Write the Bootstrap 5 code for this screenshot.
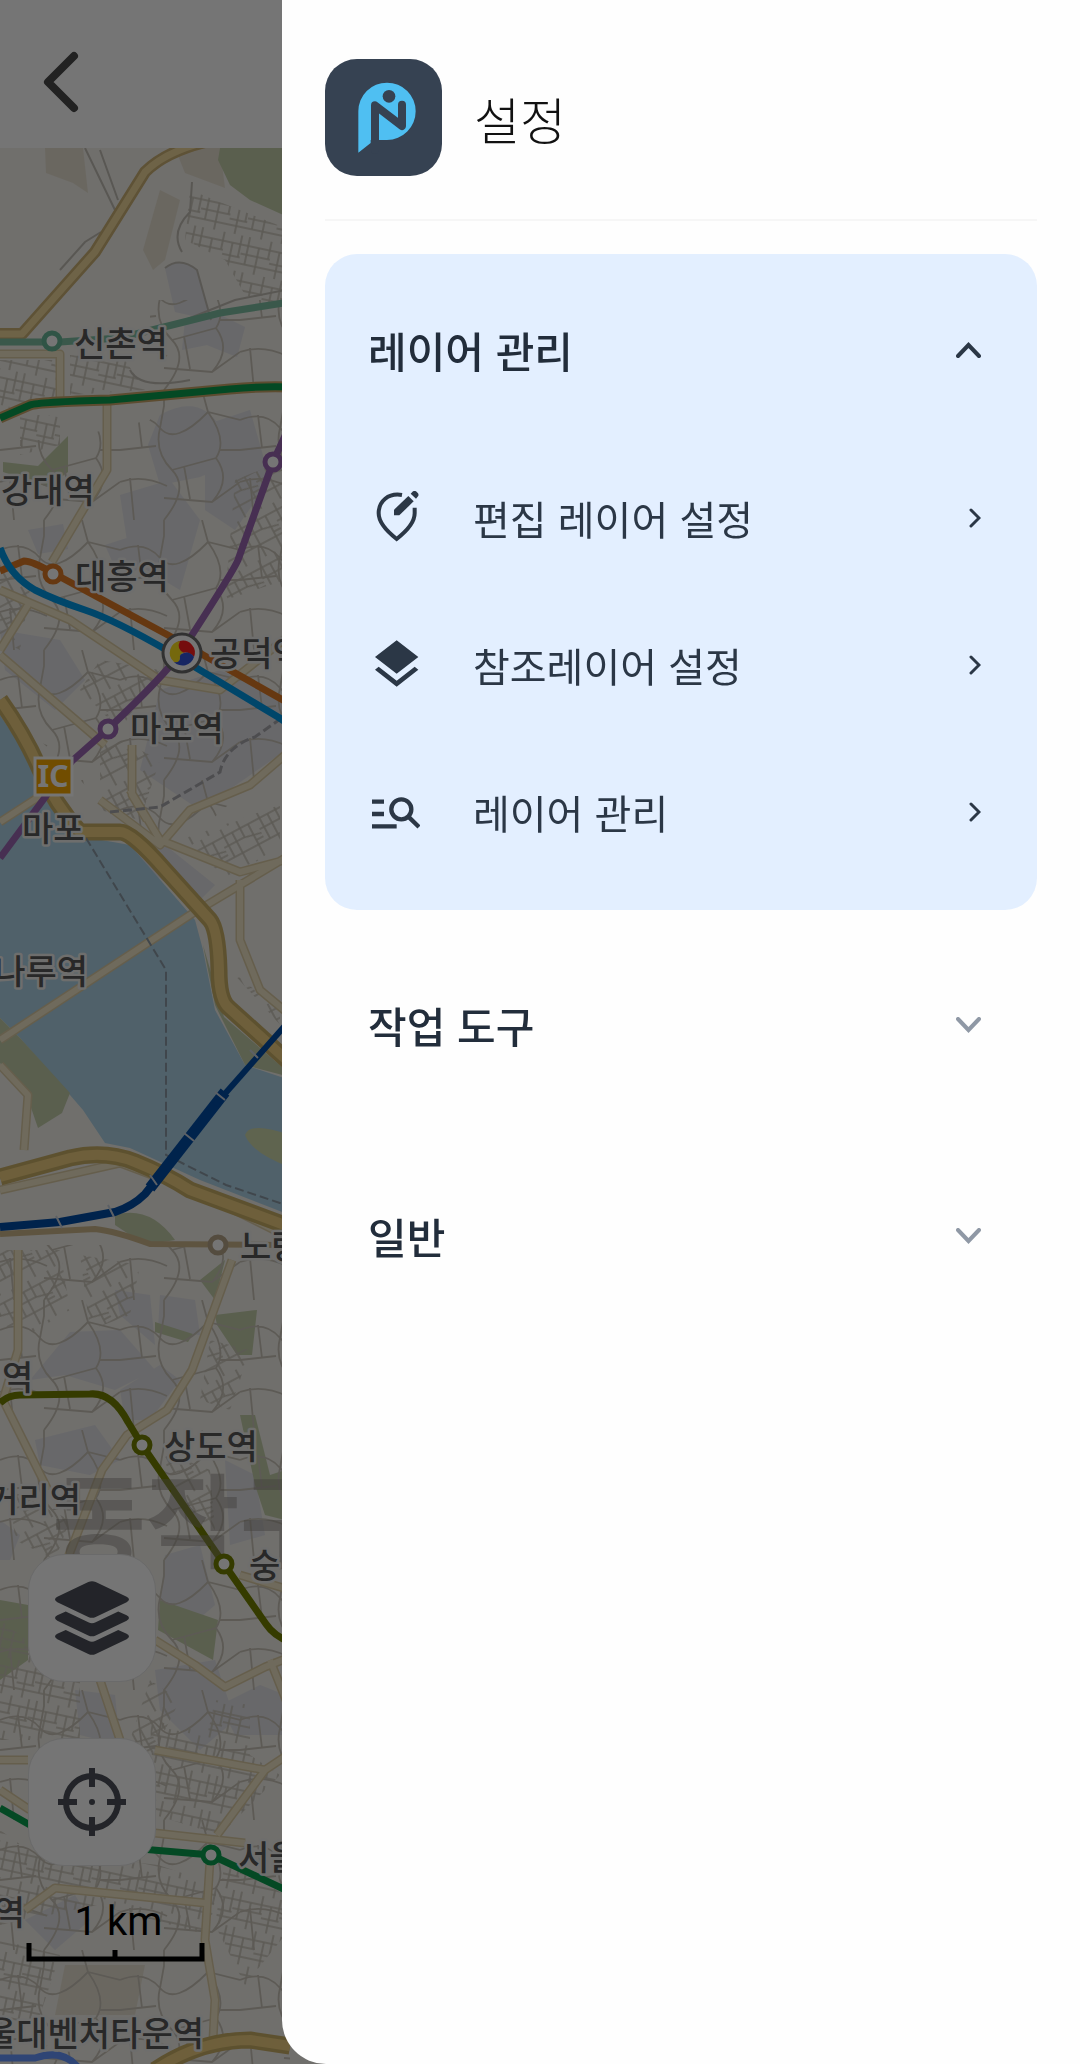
<!DOCTYPE html>
<html lang="ko">
<head>
<meta charset="utf-8">
<meta name="viewport" content="width=device-width, initial-scale=1">
<title>설정</title>
<link href="https://cdn.jsdelivr.net/npm/bootstrap@5.3.0/dist/css/bootstrap.min.css" rel="stylesheet">
<style>
  :root { --ink: #2b3746; --panel: #e3efff; }
  body { font-family: "Noto Sans CJK KR", sans-serif; color: var(--ink); background: #fff; }
  .topbar { height: 148px; padding: 0 40px; }
  .back-btn { width: 44px; height: 68px; margin-top: 16px; line-height: 0; }
  .map-area { background: #f3f1eb; }
  .map-tools { padding: 0 26px 102px; }
  .tool-btn { width: 128px; height: 128px; border-radius: 36px; background: #fff; color: #4c5059; border: 1px solid #e6e6e6; }
  .tool-stack { gap: 56px; padding-left: 2px; }
  .scale-text { font: 40px/40px Roboto, sans-serif; color: #000; margin-top: 36px; padding-left: 6px; width: 179px; text-align: center; }
  .scale-rule { display: block; }
  .scrim { background: rgba(0, 0, 0, .54); z-index: 1040; }
  .drawer.offcanvas { --bs-offcanvas-width: calc(100% - 282px); --bs-offcanvas-bg: #fefefe; --bs-offcanvas-border-width: 0; border-bottom-left-radius: 44px; padding: 0 43px; }
  .drawer-head { padding: 59px 0 43px; gap: 32px; border-bottom: 2px solid #f6f6f6; margin-bottom: 33px; }
  .drawer-title { font-size: 50px; line-height: 60px; font-weight: 300; color: #111; }
  .menu-stack { gap: 19px; }
  .menu-group { border-radius: 32px; }
  .menu-group.is-open { background: var(--panel); padding-bottom: 23px; }
  .group-btn { height: 192px; padding: 0 56px 0 43px; font-size: 42px; line-height: 60px; font-weight: 500; color: #222d3b; }
  .group-btn .chev { color: #8f98a5; }
  .is-open .group-btn .chev { color: var(--ink); }
  .menu-link { height: 147px; padding: 0 56px 4px 47px; font-size: 40px; line-height: 60px; color: var(--ink); }
  .menu-link span { margin-left: 53px; }
  .map-label { font: 500 34px "Noto Sans CJK KR", sans-serif; fill: #575757; stroke: #f0f0ee; stroke-width: 5px; paint-order: stroke; stroke-linejoin: round; }
  .district { font: 700 102px "Noto Sans CJK KR", sans-serif; fill: #8c8880; fill-opacity: .45; }
  .ic-text { font: 700 30px "Noto Sans", sans-serif; fill: #fff; }
</style>
<script src="https://cdn.jsdelivr.net/npm/bootstrap@5.3.0/dist/js/bootstrap.bundle.min.js"></script>
</head>
<body>
<div class="d-flex flex-column vh-100 overflow-hidden">
  <header class="topbar bg-white d-flex align-items-center flex-shrink-0">
    <button type="button" class="btn p-0 border-0 back-btn" aria-label="뒤로">
      <svg width="44" height="68" viewBox="0 0 44 68" fill="none" stroke="#4a4a4a" stroke-width="8" stroke-linecap="round" stroke-linejoin="round"><path d="M34 8 8 34l26 26"/></svg>
    </button>
  </header>
  <main class="map-area position-relative flex-fill overflow-hidden">
    <svg class="position-absolute top-0 start-0 w-100 h-100" viewBox="0 148 1080 1916" preserveAspectRatio="xMinYMin slice" fill="none">
      <defs>
        <pattern id="blocks" width="48" height="36" patternUnits="userSpaceOnUse" patternTransform="rotate(12)"><path d="M0 9H48M0 18H30M30 22H48M0 28H48M6 0V28M17 9V36M28 0V18M38 9V36M46 0V22" stroke="#c9c4b8" stroke-width="1.6"/></pattern>
        <pattern id="blocks2" width="40" height="44" patternUnits="userSpaceOnUse" patternTransform="rotate(-28)"><path d="M0 8H40M0 18H22L40 22M0 31H40M5 0V31M14 8V44M23 0V18M32 8V44M32 26H40" stroke="#c9c4b8" stroke-width="1.6"/></pattern>
        <pattern id="lanes" width="120" height="130" patternUnits="userSpaceOnUse"><path d="M0 30Q25 20 40 38T88 22L120 30M40 38Q34 62 52 80T44 130M52 80L96 68Q108 50 88 22L82 0M96 68Q112 90 92 112L44 108M0 92Q22 84 47 96M92 112L120 92M0 60L36 56M64 76 70 109M18 25 22 58M44 0V16L40 38M120 60L99 60M10 88 14 130" stroke="#cac5b9" stroke-width="1.8"/></pattern>
      </defs>
      <!-- land use -->
      <g fill="#e2e2e8">
        <path d="M165 268q15-12 32 2l14 50-36-8zM185 320l30-8 30 15-8 30-30-12-25 5zM160 415q40-22 60 12t-20 50l-40 8-12-40zM205 425l45-15 20 70-35 50-30-20zM120 495l50-15 30 40-20 70-50-30zM28 530l35-6 5 25-30 5zM105 545l25-8 12 30-22 12zM0 630l60 10 25 40-30 30-50-40zM160 690l60-20 66 30v50l-86 60-60-40zM115 845h50l50 40-20 20zM30 1380l40-48 50-2 35 40-40 20-50-15zM115 1290l35 5 5 50-35-30zM160 1295l35 5 5 35-42-5zM120 1390l40-25 20 15-30 40-25 0zM35 1440l60-15 25 35-30 15-50-10zM165 1555l35-10 15 60-35 30-20-30zM225 1460l30 15 10 60-35 10zM0 1520l20 15-10 25-10 0zM75 1690l40 5 5 50-40-10zM155 1670l60-10 20 60-35 30-40-40zM220 1705l40-20 25 10v40l-50 0zM25 1920l50-25 15 25-35 30z"/>
      </g>
      <g fill="#e8e1d2"><path d="M45 148h38l5 45-15-10-27-10zM160 190l20 10-15 60-12 10-10-20zM175 148h45l5 40-40-15zM65 1965h80l-10 50-80 0z"/></g>
      <g fill="#c4cfaa">
        <path d="M220 148h70v70l-40-18-20-15-12-25zM3 462l35 4 30-30v36l-20 15-45-15zM203 945l12 60 30 60 45 12-8-10-58-50zM115 1215q35-10 60 25l-30 5-30-20zM200 1280l25-20-10 40zM215 1315l42-5-5 45-15 0-20-30zM155 1322l38 12-5 8-33-10zM240 1415l15 0 15 60 15-5v50l-20-5-10-30zM160 1600l58 20-5 40-55-30zM0 1600l28 5v55l-28 20z"/>
      </g>
      <path fill="#aed3e6" d="M0 715 30 760 50 800 90 838 130 845 195 920 203 950 215 1010 245 1065 290 1080V1215L200 1180 130 1148 105 1143 83 1110 70 1095 20 1038 0 1018z"/>
      <path fill="#c4cfaa" d="M0 1018l20 20 50 55-8 20-24 15-12-35-26-30z"/>
      <path fill="#d0d9ac" d="M245 1135q5-14 45 0v32q-38-14-45-32z"/>
      <!-- minor streets -->
      <path fill="url(#blocks)" d="M190 190l100 40v80l-45-15-20-35-40-20zM0 360h55l5 35-60 15zM70 355l55 5 20 30-75 5zM20 415l40 0v30l-40 10zM0 1620l80 60v60l-80 0zM150 1720l70 15 60 40-60 60-65-20zM0 1830l28 20 130 15 60 20-10 50-110-30-98 20zM0 1940l60 15-20 60-40 20zM225 1860l60 35v40l-40 50-30-60zM215 1700l35 5v50l-45-10z"/>
      <path fill="url(#blocks2)" d="M235 480l50-20v120l-60 20zM100 660l60 10-40 60-40-40zM0 560l30 30-10 60-20-10zM100 730l60 30-20 60-40-10zM180 840l100-35v40l-50 35zM230 970l55 60-5-10v-10zM210 1340l40 10-20 60-30-10zM10 1490l60 30-15 40-40-20zM160 1450l50 20 5 60-30-20zM0 1250h60l10 60-50 30-20-20zM80 1255l60 10-10 50-40 15zM150 1680l30 20-30 60-20-20z"/>
      <path fill="url(#lanes)" d="M150 300H290V750L200 830 130 830 40 740 0 690V440H60L150 420zM0 1245H290V2064H0z"/>
      <path d="M165 268q15-12 32 2l14 50M192 182l-2 30q-20 20-8 40M85 148l30 62M100 150l18 50M60 270l25-28 16-10M185 320l50-20 50-10M130 370q10 20 60 10" stroke="#c2beb5" stroke-width="2"/>
      <!-- secondary roads -->
      <g stroke-linejoin="round">
        <path d="M0 354h60v48M107 400v70l-30 50-25 42M0 590l70 30 90 60 60 10 70-55M28 605 0 650M0 655 105 745M132 745v50l15 25M0 822 60 783M100 800l60 45 30-35 60-25 35-30M130 790l30 50 80 32 45-12M0 1040 190 915 290 855M240 880l0 60 20 50 30 25M0 1190l120-27 80 30 90 45M0 1065l28 30-4 55M18 1250v100l-15 50 45 90M232 1260l-40 110-25 40-40 25-25 35-35 90M155 1640l40 25 30 22 40-20 25-10M100 1680l20 60M0 1760h28M155 1750l110 20 30-20M265 1770l-48 65M155 1833l90 10M0 1790l30 20M25 1910l30-22 150 15M210 1860l-5 80 10 60-2 40M240 1575l50 15M270 1660l20 50" stroke="#ddcda6" stroke-width="9"/>
        <path d="M0 354h60v48M107 400v70l-30 50-25 42M0 590l70 30 90 60 60 10 70-55M28 605 0 650M0 655 105 745M132 745v50l15 25M0 822 60 783M100 800l60 45 30-35 60-25 35-30M130 790l30 50 80 32 45-12M0 1040 190 915 290 855M240 880l0 60 20 50 30 25M0 1190l120-27 80 30 90 45M0 1065l28 30-4 55M18 1250v100l-15 50 45 90M232 1260l-40 110-25 40-40 25-25 35-35 90M155 1640l40 25 30 22 40-20 25-10M100 1680l20 60M0 1760h28M155 1750l110 20 30-20M265 1770l-48 65M155 1833l90 10M0 1790l30 20M25 1910l30-22 150 15M210 1860l-5 80 10 60-2 40M240 1575l50 15M270 1660l20 50" stroke="#f1e7c9" stroke-width="6"/>
      </g>
      <!-- trunk roads -->
      <g stroke-linejoin="round">
        <path d="M0 334h22L95 252l50-80q20-20 60-30" stroke="#cdb276" stroke-width="12"/>
        <path d="M0 334h22L95 252l50-80q20-20 60-30" stroke="#efd89c" stroke-width="7"/>
        <path d="M0 700q25 35 40 70t40 62h40q12 0 45 38l45 50q8 10 9 50 0 30 10 38l61 55M0 1177l70-19q35-8 65 4t55 28l100 37M155 2070q45-30 95-30l40 6" stroke="#cbb068" stroke-width="17"/>
        <path d="M0 700q25 35 40 70t40 62h40q12 0 45 38l45 50q8 10 9 50 0 30 10 38l61 55M0 1177l70-19q35-8 65 4t55 28l100 37M155 2070q45-30 95-30l40 6" stroke="#efd080" stroke-width="10"/>
      </g>
      <path d="M86 838 166 970v185l60 30 60 20" stroke="#8b9aa5" stroke-width="2" stroke-dasharray="9 4"/>
      <path d="M110 812l50-5 60-35q5-25 35-35l35-25" stroke="#a9a8ad" stroke-width="3" stroke-dasharray="9 4"/>
      <!-- rail lines -->
      <g stroke-width="7" stroke-linejoin="round">
        <path d="M0 342h60l60-4 100-25 70-11" stroke="#7fc0a4"/>
        <path d="M0 418 30 405q8-3 80-5l120-11q30-3 60-2" stroke="#caa66a" stroke-width="11"/>
        <path d="M0 418 30 405q8-3 80-5l120-11q30-3 60-2" stroke="#09a04f"/>
        <path d="M0 571l24-10q8 0 29 12l113 61 124 70" stroke="#de7a26"/>
        <path d="M0 548q10 28 35 42 20 10 50 20t85 42l108 65 12 8" stroke="#0098e6"/>
        <path d="M290 425l-17 37-35 98q-5 12-57 92-15 22-73 77l-36 32L0 858" stroke="#9c66b2"/>
        <path d="M0 1234l95-5q20 2 55 15l140 1" stroke="#cdb78c" stroke-width="6"/>
        <path d="M0 1227l60-5 55-10q18-6 30-18l75-94" stroke="#004ca7" stroke-width="8"/>
        <path d="M150 1188 225 1092" stroke="#004ca7" stroke-width="11"/>
        <path d="M215 1105 290 1020" stroke="#004ca7" stroke-width="6"/>
        <path d="M56 1216l6 12M108 1205l6 12M150 1175l7 10M184 1133l10 8M215 1092l10 8M250 1050l8 8" stroke="#c9d2dd" stroke-width="2"/>
        <path d="M0 1403q8-8 20-8l70-1q22-2 38 28l14 23 82 119 42 60q8 12 24 18" stroke="#738200"/>
        <path d="M0 1808l60 34 151 13 79 37" stroke="#09a04f"/>
        <path d="M0 2058h35q30-10 45 12" stroke="#6696fe"/>
      </g>
      <text class="district" x="52" y="1560">동작구</text>
      <g fill="#fff" stroke-width="5">
        <circle cx="52" cy="341" r="8" stroke="#69b898"/><circle cx="273" cy="462" r="8" stroke="#9c66b2"/>
        <circle cx="53" cy="574" r="8" stroke="#de7a26"/><circle cx="108" cy="729" r="8" stroke="#9c66b2"/>
        <circle cx="218" cy="1245" r="8" stroke="#b8a68a"/><circle cx="142" cy="1445" r="8" stroke="#738200"/>
        <circle cx="224" cy="1564" r="8" stroke="#738200"/><circle cx="211" cy="1855" r="8" stroke="#09a04f"/>
      </g>
      <circle cx="182" cy="653" r="19" fill="#fff" stroke="#6b6b6b" stroke-width="3"/>
      <path fill="#ff1e1e" d="M182 653a6 6 0 0 1-2-12 12 12 0 0 1 14 16q-5-6-12-4z"/>
      <path fill="#ffe21e" d="M180 641a12 12 0 0 0-6 21q6 2 6-4 0-5 4-5-8-4-4-12z"/>
      <path fill="#3454d8" d="M174 662a12 12 0 0 0 20-5q-4-6-10-4-5 1-4 5 0 5-6 4z"/>
      <path d="M35 758h37v37H35z" fill="#f7a800" stroke="#fff" stroke-width="3"/>
      <text class="ic-text" x="53" y="787" text-anchor="middle">IC</text>
      <g class="map-label">
        <text x="74" y="356">신촌역</text><text x="1" y="503">강대역</text><text x="75" y="589">대흥역</text>
        <text x="210" y="666">공덕역</text><text x="130" y="741">마포역</text><text x="22" y="841">마포</text>
        <text x="88" y="984" text-anchor="end">나루역</text><text x="240" y="1259">노량진역</text><text x="2" y="1390">역</text>
        <text x="164" y="1459">상도역</text><text x="81" y="1512" text-anchor="end">거리역</text><text x="249" y="1578">숭</text>
        <text x="238" y="1870">서울</text><text x="25" y="1925" text-anchor="end">역</text><text x="204" y="2046" text-anchor="end">서울대벤처타운역</text>
      </g>
    </svg>
    <div class="map-tools position-absolute bottom-0 start-0">
      <div class="tool-stack d-flex flex-column">
        <button type="button" class="tool-btn d-flex align-items-center justify-content-center p-0" aria-label="레이어">
          <svg width="74" height="74" viewBox="0 0 220 220" fill="currentColor"><path d="M99 3q11-5 22 0l92 44q14 8 0 16l-92 44q-11 5-22 0L7 63q-14-8 0-16zM7 102l25-11 67 32q11 5 22 0l67-32 25 11q14 8 0 16l-92 44q-11 5-22 0L7 118q-14-8 0-16zM7 157l25-11 67 32q11 5 22 0l67-32 25 11q14 8 0 16l-92 44q-11 5-22 0L7 173q-14-8 0-16z"/></svg>
        </button>
        <button type="button" class="tool-btn d-flex align-items-center justify-content-center p-0" aria-label="현재 위치">
          <svg width="68" height="68" viewBox="0 0 68 68" fill="none" stroke="currentColor" stroke-width="6"><circle cx="34" cy="34" r="26"/><path d="M34 0v19M34 49v19M0 34h19M49 34h19"/><circle cx="34" cy="34" r="3" fill="currentColor" stroke="none"/></svg>
        </button>
      </div>
      <div class="scale-text">1 km</div>
      <svg class="scale-rule" width="179" height="20" viewBox="0 0 179 20" fill="none" stroke="#000" stroke-width="5"><path d="M3 1v16h173V1M89 8v9"/></svg>
    </div>
  </main>
</div>

<div class="scrim position-fixed top-0 start-0 w-100 h-100"></div>

<aside class="drawer offcanvas offcanvas-end show" tabindex="-1" data-bs-backdrop="false" data-bs-scroll="true" aria-labelledby="drawerTitle">
  <div class="drawer-head d-flex align-items-center">
    <svg width="117" height="117" viewBox="134 117 351 351">
      <rect x="134" y="117" width="351" height="351" rx="96" fill="#364252"/>
      <path fill="#4fbff2" d="M234 398V274a86 86 0 1 1 86 86H271v9z"/>
      <path fill="none" stroke="#364252" stroke-width="24" stroke-linecap="round" stroke-linejoin="round" d="M284 390V256l81 62v-64"/>
      <circle cx="326" cy="229" r="19" fill="#364252"/>
    </svg>
    <h1 class="drawer-title m-0" id="drawerTitle">설정</h1>
  </div>
  <nav class="menu-stack d-flex flex-column">
    <section class="menu-group is-open">
      <button type="button" class="group-btn btn border-0 w-100 d-flex align-items-center justify-content-between" data-bs-toggle="collapse" data-bs-target="#layerMenu" aria-expanded="true" aria-controls="layerMenu">레이어 관리
        <svg class="chev" width="25" height="16" viewBox="0 0 25 16" fill="none" stroke="currentColor" stroke-width="4" stroke-linecap="round"><path d="M2 14 12.500 3 23 14"/></svg>
      </button>
      <div class="collapse show" id="layerMenu">
        <a href="#" class="menu-link d-flex align-items-center text-decoration-none">
          <svg width="48" height="54" viewBox="156 576 144 162" fill="none" stroke="currentColor" stroke-width="12"><path d="M246 588c-41-7-70 19-70 55 0 26 22 52 54 77 32-25 54-51 54-77v-17"/><path d="M222 649v-17l43-41 16 16-43 42z" fill="currentColor" stroke="none"/><path d="m272 584 7-7q5-3 9 0l6 6q3 5 0 9l-6 7z" fill="currentColor" stroke="none"/></svg>
          <span>편집 레이어 설정</span>
          <svg class="ms-auto" width="12" height="20" viewBox="0 0 12 20" fill="none" stroke="currentColor" stroke-width="3" stroke-linecap="round"><path d="m2 2 8 8-8 8"/></svg>
        </a>
        <a href="#" class="menu-link d-flex align-items-center text-decoration-none">
          <svg width="48" height="54" viewBox="156 117 144 162" fill="currentColor"><path d="m230 124 65 50-65 50-65-50zM165 212l11-9 54 42 54-42 11 9-65 51z"/></svg>
          <span>참조레이어 설정</span>
          <svg class="ms-auto" width="12" height="20" viewBox="0 0 12 20" fill="none" stroke="currentColor" stroke-width="3" stroke-linecap="round"><path d="m2 2 8 8-8 8"/></svg>
        </a>
        <a href="#" class="menu-link d-flex align-items-center text-decoration-none">
          <svg width="48" height="54" viewBox="156 558 144 162" fill="none" stroke="currentColor" stroke-width="13"><path d="M156 608h36M156 645h36M156 682h74M265 653l32 31"/><circle cx="244" cy="631" r="30"/></svg>
          <span>레이어 관리</span>
          <svg class="ms-auto" width="12" height="20" viewBox="0 0 12 20" fill="none" stroke="currentColor" stroke-width="3" stroke-linecap="round"><path d="m2 2 8 8-8 8"/></svg>
        </a>
      </div>
    </section>
    <section class="menu-group">
      <button type="button" class="group-btn btn border-0 w-100 d-flex align-items-center justify-content-between" aria-expanded="false">작업 도구
        <svg class="chev" width="25" height="16" viewBox="0 0 25 16" fill="none" stroke="currentColor" stroke-width="4" stroke-linecap="round"><path d="M2 2 12.500 13 23 2"/></svg>
      </button>
    </section>
    <section class="menu-group">
      <button type="button" class="group-btn btn border-0 w-100 d-flex align-items-center justify-content-between" aria-expanded="false">일반
        <svg class="chev" width="25" height="16" viewBox="0 0 25 16" fill="none" stroke="currentColor" stroke-width="4" stroke-linecap="round"><path d="M2 2 12.500 13 23 2"/></svg>
      </button>
    </section>
  </nav>
</aside>
</body>
</html>
